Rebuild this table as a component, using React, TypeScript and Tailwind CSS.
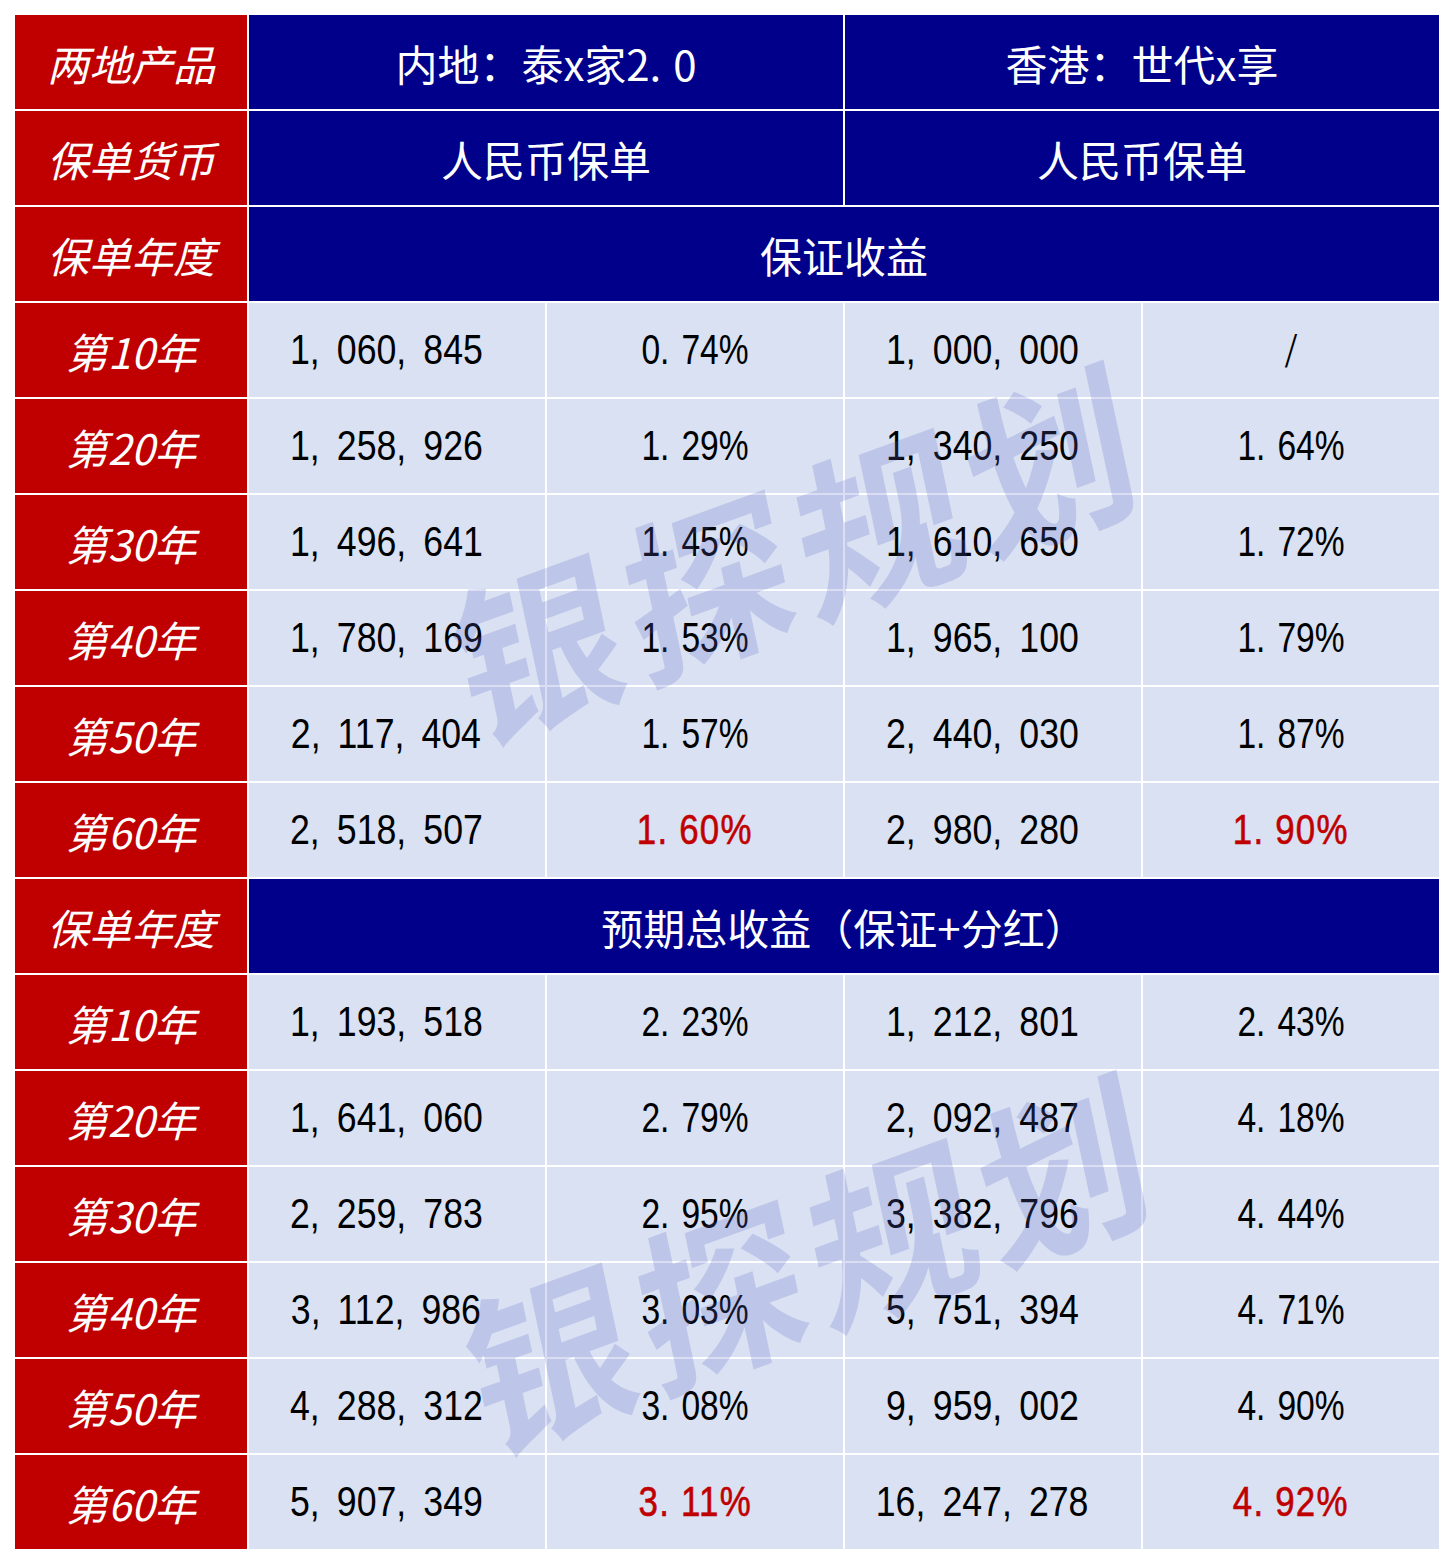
const cjk = "font-['Noto_Sans_CJK_SC',sans-serif]";
const num = "font-['Liberation_Sans',sans-serif]";

type Cell = { v: string; red?: boolean };
type Row = { year: string; cells: Cell[] };

const guaranteed: Row[] = [
  { year: "第10年", cells: [{ v: "1,060,845" }, { v: "0.74%" }, { v: "1,000,000" }, { v: "/" }] },
  { year: "第20年", cells: [{ v: "1,258,926" }, { v: "1.29%" }, { v: "1,340,250" }, { v: "1.64%" }] },
  { year: "第30年", cells: [{ v: "1,496,641" }, { v: "1.45%" }, { v: "1,610,650" }, { v: "1.72%" }] },
  { year: "第40年", cells: [{ v: "1,780,169" }, { v: "1.53%" }, { v: "1,965,100" }, { v: "1.79%" }] },
  { year: "第50年", cells: [{ v: "2,117,404" }, { v: "1.57%" }, { v: "2,440,030" }, { v: "1.87%" }] },
  { year: "第60年", cells: [{ v: "2,518,507" }, { v: "1.60%", red: true }, { v: "2,980,280" }, { v: "1.90%", red: true }] },
];

const expected: Row[] = [
  { year: "第10年", cells: [{ v: "1,193,518" }, { v: "2.23%" }, { v: "1,212,801" }, { v: "2.43%" }] },
  { year: "第20年", cells: [{ v: "1,641,060" }, { v: "2.79%" }, { v: "2,092,487" }, { v: "4.18%" }] },
  { year: "第30年", cells: [{ v: "2,259,783" }, { v: "2.95%" }, { v: "3,382,796" }, { v: "4.44%" }] },
  { year: "第40年", cells: [{ v: "3,112,986" }, { v: "3.03%" }, { v: "5,751,394" }, { v: "4.71%" }] },
  { year: "第50年", cells: [{ v: "4,288,312" }, { v: "3.08%" }, { v: "9,959,002" }, { v: "4.90%" }] },
  { year: "第60年", cells: [{ v: "5,907,349" }, { v: "3.11%", red: true }, { v: "16,247,278" }, { v: "4.92%", red: true }] },
];

// punctuation in the sheet is rendered with a trailing gap
function Spaced({ text, gap }: { text: string; gap: string }) {
  return (
    <>
      {text.split("").map((ch, i) =>
        ch === "," || ch === "." ? (
          <span key={i} className={gap}>
            {ch}
          </span>
        ) : (
          <span key={i}>{ch}</span>
        )
      )}
    </>
  );
}

function Label({ children }: { children: React.ReactNode }) {
  return (
    <div className={`flex items-center justify-center bg-[#c00000] text-[42px] italic text-white ${cjk}`}>
      {children}
    </div>
  );
}

function Head({ children, span }: { children: React.ReactNode; span: string }) {
  return (
    <div className={`flex items-center justify-center bg-[#00008b] text-[42px] text-white ${cjk} ${span}`}>
      {children}
    </div>
  );
}

function DataRows({ rows }: { rows: Row[] }) {
  return (
    <>
      {rows.map((r) => (
        <div key={r.year} className="contents">
          <Label>{r.year}</Label>
          {r.cells.map((c, i) => {
            const amount = i % 2 === 0;
            if (c.v === "/") {
              return (
                <div key={i} className="flex items-center justify-center bg-[#d9e1f2] text-black">
                  <span className="inline-block font-['DejaVu_Sans',sans-serif] text-[40px] font-extralight leading-none">
                    /
                  </span>
                </div>
              );
            }
            return (
              <div
                key={i}
                className={`flex items-center justify-center bg-[#d9e1f2] ${num} ${amount ? "pr-[22px]" : ""}`}
              >
                {c.red ? (
                  <span className="inline-block scale-x-[0.83] whitespace-nowrap text-[42px] leading-none tracking-[1.5px] text-[#c00000] [-webkit-text-stroke:0.6px_#c00000]">
                    <Spaced text={c.v} gap="mr-[13px]" />
                  </span>
                ) : amount ? (
                  <span className="inline-block scale-x-[0.85] whitespace-nowrap text-[42px] leading-none text-black">
                    <Spaced text={c.v} gap="mr-[20px]" />
                  </span>
                ) : (
                  <span className="inline-block scale-x-[0.8] whitespace-nowrap text-[42px] leading-none text-black">
                    <Spaced text={c.v} gap="mr-[15px]" />
                  </span>
                )}
              </div>
            );
          })}
        </div>
      ))}
    </>
  );
}

export default function App() {
  return (
    <div className="min-h-[1564px] w-[1454px] bg-white p-[15px]">
      <div className="relative w-[1424px] overflow-hidden">
        <div className="grid grid-cols-[232px_296px_296px_296px_296px] auto-rows-[94px] gap-[2px]">
          <Label>两地产品</Label>
          <Head span="col-span-2">
            内地：泰x家2<span className="mr-[12px]">.</span>0
          </Head>
          <Head span="col-span-2">香港：世代x享</Head>

          <Label>保单货币</Label>
          <Head span="col-span-2">人民币保单</Head>
          <Head span="col-span-2">人民币保单</Head>

          <Label>保单年度</Label>
          <Head span="col-span-4">保证收益</Head>
          <DataRows rows={guaranteed} />

          <Label>保单年度</Label>
          <Head span="col-span-4">预期总收益（保证+分红）</Head>
          <DataRows rows={expected} />
        </div>

        {/* watermarks */}
        <div
          className={`pointer-events-none absolute left-[782px] top-[530px] -translate-x-1/2 -translate-y-1/2 rotate-[-20deg] skew-x-[-8deg] whitespace-nowrap text-[172px] font-bold leading-none tracking-[10px] text-[rgba(90,100,200,0.22)] ${cjk}`}
        >
          银探规划
        </div>
        <div
          className={`pointer-events-none absolute left-[795px] top-[1240px] -translate-x-1/2 -translate-y-1/2 rotate-[-20deg] skew-x-[-8deg] whitespace-nowrap text-[172px] font-bold leading-none tracking-[10px] text-[rgba(90,100,200,0.22)] ${cjk}`}
        >
          银探规划
        </div>
      </div>
    </div>
  );
}
